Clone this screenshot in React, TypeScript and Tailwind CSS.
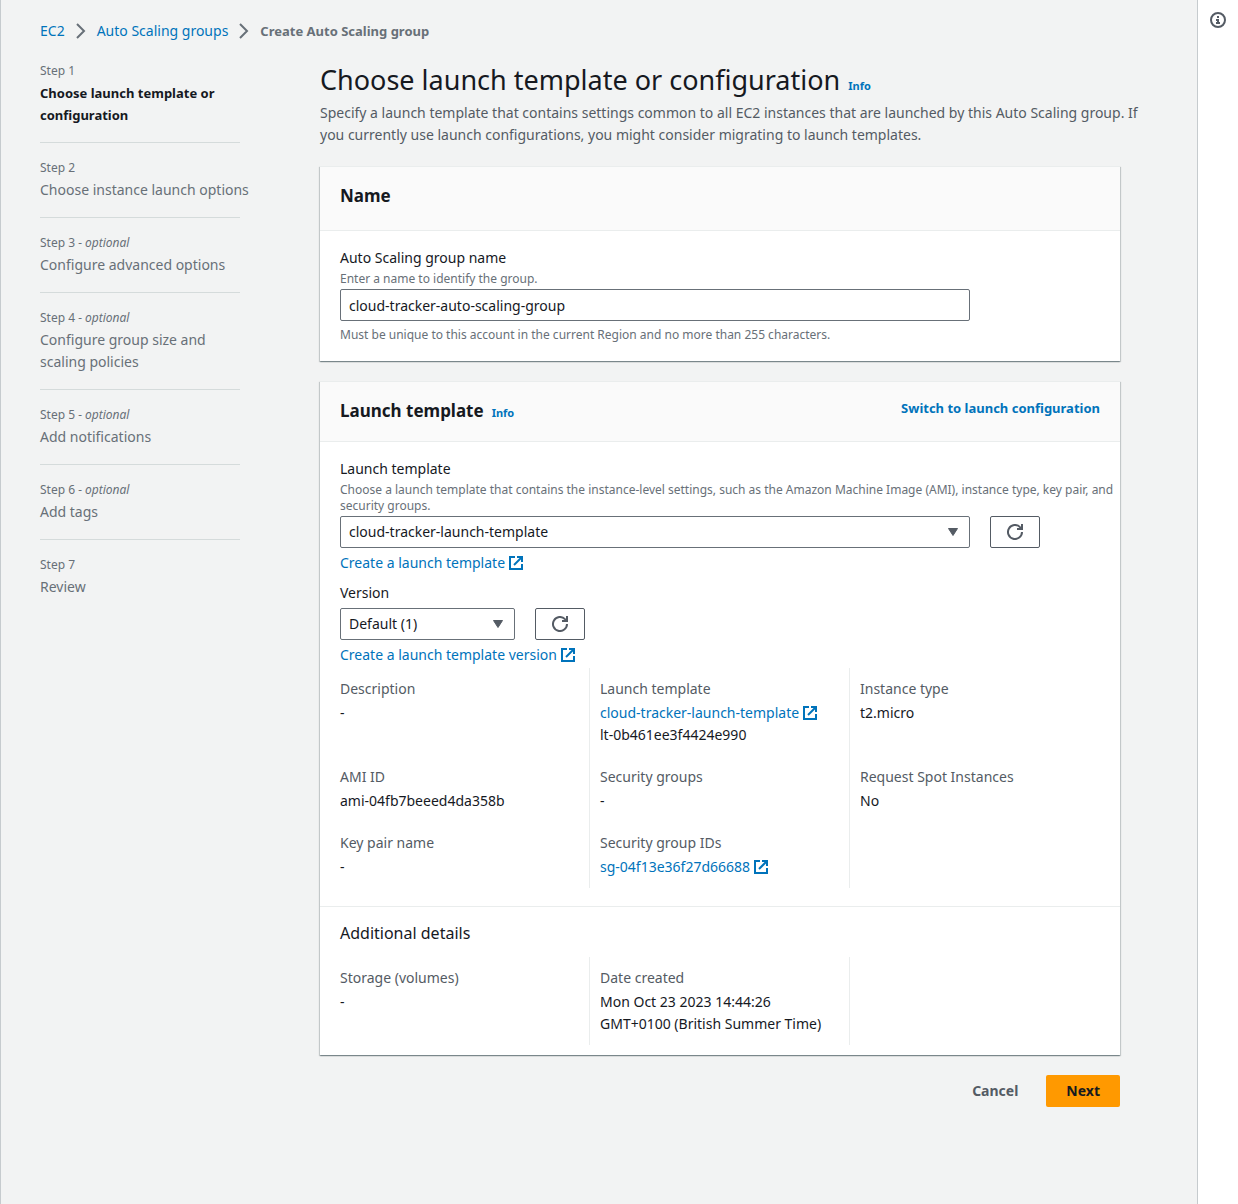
import type { ReactNode } from "react";

const steps = [
  { label: "Step 1", title: "Choose launch template or configuration", active: true },
  { label: "Step 2", title: "Choose instance launch options" },
  { label: "Step 3", optional: true, title: "Configure advanced options" },
  { label: "Step 4", optional: true, title: "Configure group size and scaling policies" },
  { label: "Step 5", optional: true, title: "Add notifications" },
  { label: "Step 6", optional: true, title: "Add tags" },
  { label: "Step 7", title: "Review" },
];

function Chevron() {
  return (
    <svg viewBox="0 0 16 16" className="size-4 shrink-0" fill="none" stroke="#687078" strokeWidth="2" aria-hidden="true">
      <path d="M4 1l7 7-7 7" />
    </svg>
  );
}

function ExternalIcon() {
  return (
    <svg viewBox="0 0 16 16" className="size-4 shrink-0" fill="none" stroke="currentColor" strokeWidth="2" aria-hidden="true">
      <path d="M7 2H2v12h12V9" />
      <path d="M9 2h5v5" />
      <path d="M6 10l8-8" />
    </svg>
  );
}

function ExternalLink({ children }: { children: ReactNode }) {
  return (
    <a href="#" className="inline-flex items-center gap-[3px] text-[#0073bb] hover:underline">
      {children}
      <ExternalIcon />
    </a>
  );
}

function RefreshButton({ label }: { label: string }) {
  return (
    <button
      type="button"
      aria-label={label}
      className="flex h-8 w-[50px] shrink-0 items-center justify-center rounded-xs border border-[#545b64] bg-white text-[#545b64]"
    >
      <svg viewBox="0 0 16 16" className="size-4" fill="none" stroke="currentColor" strokeWidth="2" aria-hidden="true">
        <path d="M15 8a7 7 0 1 1-2-4.9L15 5" />
        <path d="M10 5h5V0" />
      </svg>
    </button>
  );
}

function Select({ id, value }: { id: string; value: string }) {
  return (
    <div className="relative">
      <select
        id={id}
        defaultValue={value}
        className="block h-8 w-full appearance-none rounded-xs border border-[#687078] bg-white px-2 text-[#16191f]"
      >
        <option>{value}</option>
      </select>
      <svg viewBox="0 0 16 16" className="pointer-events-none absolute top-2 right-[9px] size-4" aria-hidden="true">
        <path d="M3.5 4.5h9L8 11.5z" fill="#545b64" stroke="#545b64" strokeLinejoin="round" />
      </svg>
    </div>
  );
}

function Card({ header, children }: { header: ReactNode; children: ReactNode }) {
  return (
    <section className="bg-white shadow-[0_1px_1px_0_rgba(0,28,36,0.3),1px_1px_1px_0_rgba(0,28,36,0.15),-1px_1px_1px_0_rgba(0,28,36,0.15)]">
      <header className="flex items-start justify-between border-y border-[#eaeded] bg-[#fafafa] px-5">{header}</header>
      {children}
    </section>
  );
}

function Field({ label, children }: { label: string; children?: ReactNode }) {
  return (
    <div className="border-[#eaeded] px-2.5 py-2.5 not-nth-[3n]:border-r">
      {label && (
        <>
          <dt className="mb-0.5 text-[#545b64]">{label}</dt>
          <dd>{children}</dd>
        </>
      )}
    </div>
  );
}

export default function App() {
  return (
    <div className="flex min-h-screen bg-white font-['Noto_Sans',sans-serif] text-[14px] leading-[22px] text-[#16191f]">
      <div className="min-w-0 flex-1 border-x border-[#c6cbce] bg-[#f2f3f3] pt-5 pr-5 pb-10 pl-[39px]">
        <nav aria-label="Breadcrumb">
          <ol className="flex items-center gap-2">
            <li><a href="#" className="text-[#0073bb]">EC2</a></li>
            <li><Chevron /></li>
            <li><a href="#" className="text-[#0073bb]">Auto Scaling groups</a></li>
            <li><Chevron /></li>
            <li aria-current="page" className="text-[13px] font-bold text-[#687078]">Create Auto Scaling group</li>
          </ol>
        </nav>

        <div className="mt-1 flex gap-20">
          <nav aria-label="Steps" className="w-[200px] shrink-0">
            <ol>
              {steps.map((s) => (
                <li key={s.label} className="border-b border-[#d5dbdb] pt-3.5 pb-4 last:border-0">
                  <div className="text-[12px] text-[#687078]">
                    {s.label}
                    {s.optional && <i> - optional</i>}
                  </div>
                  <div className={s.active ? "text-[13px] leading-[22px] font-bold" : "-mr-3 text-[#687078]"}>{s.title}</div>
                </li>
              ))}
            </ol>
          </nav>

          <main className="max-w-[800px] min-w-0 flex-1 pt-4">
            <div className="flex items-baseline gap-2">
              <h1 className="text-[27px] leading-9">Choose launch template or configuration</h1>
              <a href="#" className="text-[11px] leading-4 font-bold text-[#0073bb]">Info</a>
            </div>
            <p className="mt-1 -mr-6 text-[#545b64]">
              Specify a launch template that contains settings common to all EC2 instances that are launched by this Auto Scaling group. If
              you currently use launch configurations, you might consider migrating to launch templates.
            </p>

            <div className="mt-5 flex flex-col gap-5">
              <Card header={<h2 className="pt-[18px] pb-[23px] text-[17px] font-bold">Name</h2>}>
                <div className="px-5 pt-4 pb-[18px]">
                  <label htmlFor="group-name" className="block">Auto Scaling group name</label>
                  <p id="name-hint" className="my-0.5 text-[12px] leading-4 text-[#687078]">Enter a name to identify the group.</p>
                  <input
                    id="group-name"
                    type="text"
                    aria-describedby="name-hint"
                    defaultValue="cloud-tracker-auto-scaling-group"
                    className="block h-8 w-full max-w-[630px] rounded-xs border border-[#687078] bg-white px-2"
                  />
                  <p className="mt-1.5 text-[12px] leading-4 text-[#687078]">
                    Must be unique to this account in the current Region and no more than 255 characters.
                  </p>
                </div>
              </Card>

              <Card
                header={
                  <>
                    <div className="flex items-baseline gap-2 pt-[18px] pb-[19px]">
                      <h2 className="text-[17px] font-bold">Launch template</h2>
                      <a href="#" className="text-[11px] leading-4 font-bold text-[#0073bb]">Info</a>
                    </div>
                    <button type="button" className="mt-[15px] text-[13px] font-bold text-[#0073bb]">Switch to launch configuration</button>
                  </>
                }
              >
                <div className="px-5 pt-4">
                  <label htmlFor="template" className="block">Launch template</label>
                  <p className="my-0.5 -mr-4 text-[12px] leading-4 text-[#687078]">
                    Choose a launch template that contains the instance-level settings, such as the Amazon Machine Image (AMI), instance type, key pair, and
                    security groups.
                  </p>
                  <div className="flex gap-5">
                    <div className="w-full max-w-[630px]"><Select id="template" value="cloud-tracker-launch-template" /></div>
                    <RefreshButton label="Refresh launch templates" />
                  </div>
                  <div className="mt-1"><ExternalLink>Create a launch template</ExternalLink></div>
                  <label htmlFor="version" className="mt-2 block">Version</label>
                  <div className="mt-1 flex gap-5">
                    <div className="w-[175px]"><Select id="version" value="Default (1)" /></div>
                    <RefreshButton label="Refresh versions" />
                  </div>
                  <div className="mt-1"><ExternalLink>Create a launch template version</ExternalLink></div>
                </div>

                <dl className="mx-2.5 mt-0.5 mb-[18px] grid grid-cols-3">
                  <Field label="Description">-</Field>
                  <Field label="Launch template">
                    <ExternalLink>cloud-tracker-launch-template</ExternalLink>
                    <div>lt-0b461ee3f4424e990</div>
                  </Field>
                  <Field label="Instance type">t2.micro</Field>
                  <Field label="AMI ID">ami-04fb7beeed4da358b</Field>
                  <Field label="Security groups">-</Field>
                  <Field label="Request Spot Instances">No</Field>
                  <Field label="Key pair name">-</Field>
                  <Field label="Security group IDs"><ExternalLink>sg-04f13e36f27d66688</ExternalLink></Field>
                  <Field label="" />
                </dl>

                <div className="border-t border-[#eaeded] pt-[15px] pb-2.5">
                  <h3 className="px-5 text-[16px]">Additional details</h3>
                  <dl className="mx-2.5 mt-[13px] grid grid-cols-3">
                    <Field label="Storage (volumes)">-</Field>
                    <Field label="Date created">Mon Oct 23 2023 14:44:26 GMT+0100 (British Summer Time)</Field>
                    <Field label="" />
                  </dl>
                </div>
              </Card>
            </div>

            <div className="mt-5 flex justify-end gap-2">
              <button type="button" className="h-8 px-5 font-bold text-[#545b64]">Cancel</button>
              <button type="button" className="h-8 rounded-xs bg-[#ff9900] px-5 font-bold">Next</button>
            </div>
          </main>
        </div>
      </div>

      <aside className="flex w-10 shrink-0 justify-center pt-3">
        <button type="button" aria-label="Open information panel" className="size-4 text-[#545b64]">
          <svg viewBox="0 0 16 16" className="size-4" aria-hidden="true">
            <circle cx="8" cy="8" r="7" fill="none" stroke="currentColor" strokeWidth="2" />
            <path d="M7 4h2v2H7zM6 7h3v3h1v2H6v-2h1V9H6z" fill="currentColor" />
          </svg>
        </button>
      </aside>
    </div>
  );
}
